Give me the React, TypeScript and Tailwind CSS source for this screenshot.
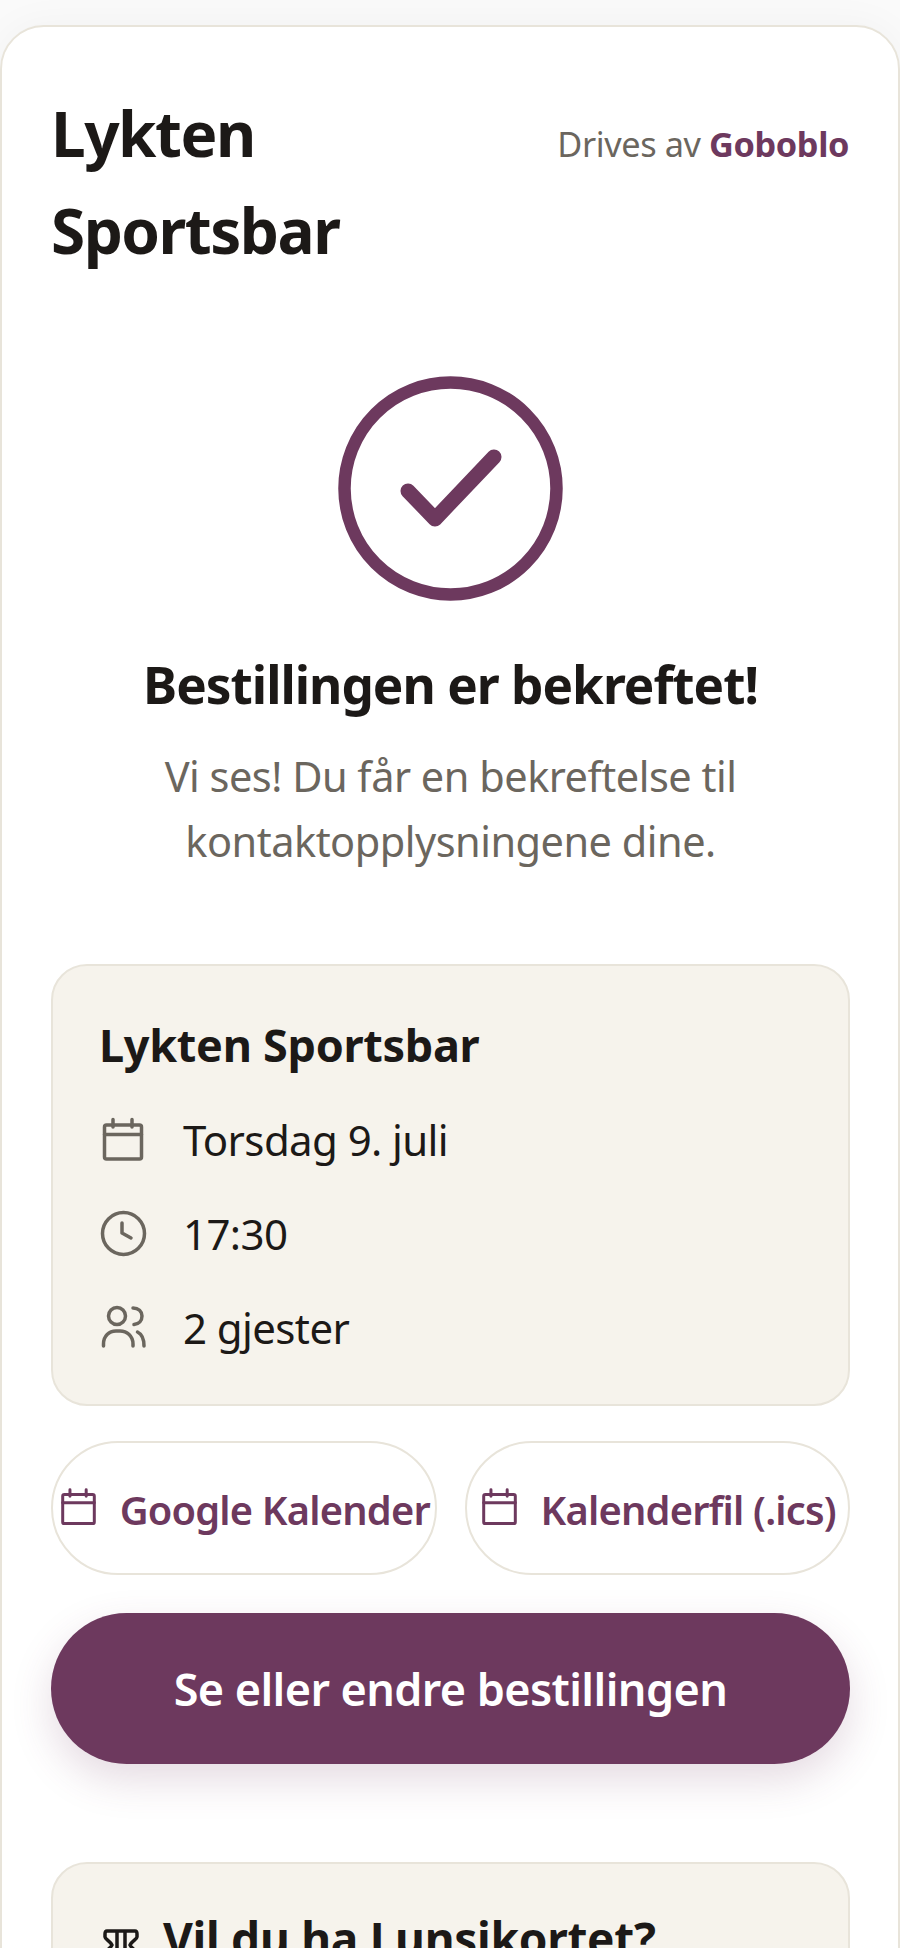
const font = { fontFamily: '"Noto Sans", "Open Sans", sans-serif' };

// Outline icons, all on a 48 unit grid with a round stroke
function Icon({ size = 48, children }: { size?: number; children: React.ReactNode }) {
  return (
    <svg
      width={size}
      height={size}
      viewBox="0 0 48 48"
      fill="none"
      stroke="currentColor"
      strokeWidth="3.5"
      strokeLinecap="round"
      strokeLinejoin="round"
      className="shrink-0"
    >
      {children}
    </svg>
  );
}

function CalendarIcon({ size }: { size?: number }) {
  return (
    <Icon size={size}>
      <rect x="5.5" y="10" width="37" height="34" rx="2" />
      <path d="M5.5 19.5H42.5M14 4.5V12M33 4.5V12" />
    </Icon>
  );
}

function ClockIcon() {
  return (
    <Icon>
      <circle cx="24.5" cy="24.5" r="21" />
      <path d="M23 14V24L32 29" />
    </Icon>
  );
}

function GuestsIcon() {
  return (
    <Icon>
      <circle cx="18" cy="13" r="8.5" />
      <path d="M4.5 43V41C4.5 33 10 28 17 28H21C28 28 34 33 34 41V43" />
      <path d="M34 5C39.5 5 43 8.5 43 13C43 17.5 40 21 35 21.5" />
      <path d="M38.5 29C42.5 31 45 35.5 45 43" />
    </Icon>
  );
}

function TicketIcon() {
  return (
    <svg width="36" height="32" viewBox="0 0 36 32" fill="none" stroke="currentColor" strokeWidth="3.5" strokeLinejoin="round" className="shrink-0">
      <path d="M4 2H32C33.5 2 34 3.5 34 5V8C34 10 29 12 27 16C29 20 34 22 34 24V27C34 28.5 33.5 30 32 30H4C2.5 30 2 28.5 2 27V24C2 22 7 20 9 16C7 12 2 10 2 8V5C2 3.5 2.500 2 4 2Z" />
      <path d="M14 2V30M22 2V30" />
    </svg>
  );
}

function DetailRow({ icon, label }: { icon: React.ReactNode; label: string }) {
  return (
    <div className="flex items-center h-[94px]">
      <div className="w-[84px] shrink-0 -translate-y-[1px] text-[#6b665e]">{icon}</div>
      <span className="text-[42px] leading-none text-[#1c1917] tracking-[-0.6px]">{label}</span>
    </div>
  );
}

function CalendarLink({ label }: { label: string }) {
  return (
    <button className="flex-1 h-[134px] rounded-full border-2 border-[#e8e4da] bg-white flex items-center justify-center gap-[21px] text-[#6d395e] overflow-hidden">
      <div className="-mt-[4px]">
        <CalendarIcon size={41} />
      </div>
      <span className="mt-[3px] text-[39.8px] font-semibold tracking-[-0.8px] whitespace-nowrap">{label}</span>
    </button>
  );
}

export default function App() {
  return (
    <div className="h-[1948px] overflow-hidden bg-[#fafafa] pt-[25px]" style={font}>
      <div className="h-[2000px] rounded-t-[44px] border-2 border-[#e8e4da] bg-white pl-[49px] pr-[48px] pt-[58px] shadow-[0_0_40px_rgba(0,0,0,0.04)]">
        <header className="flex items-start justify-between">
          <h1 className="w-[340px] text-[62px] leading-[97px] font-bold text-[#1c1917] tracking-[-1.5px]">
            Lykten Sportsbar
          </h1>
          <p className="mt-[34px] mr-[1px] text-[34.3px] leading-[50px] text-[#6b665e] tracking-[-0.4px]">
            Drives av <span className="font-bold text-[#6d395e]">Goboblo</span>
          </p>
        </header>

        <div className="mt-[97px] flex flex-col items-center text-center">
          <svg width="225" height="225" viewBox="0 0 225 225" fill="none" stroke="#6d395e" strokeLinecap="round" strokeLinejoin="round">
            <circle cx="112.5" cy="112.5" r="106" strokeWidth="12.5" />
            <path d="M70 115 L97 143 L156 81" strokeWidth="15" />
          </svg>
          <h2 className="mt-[43px] text-[51.3px] leading-[80px] font-bold text-[#1c1917] tracking-[-1px]">
            Bestillingen er bekreftet!
          </h2>
          <p className="mt-[20px] w-[660px] text-[41.5px] leading-[65px] text-[#6b665e] tracking-[-0.5px]">
            Vi ses! Du får en bekreftelse til kontaktopplysningene dine.
          </p>
        </div>

        <section className="mt-[90px] h-[442px] rounded-[36px] border-2 border-[#e8e4da] bg-[#f6f3ec] px-[46px] pt-[49px]">
          <h3 className="text-[45px] leading-[60px] font-bold text-[#1c1917] tracking-[-0.3px]">Lykten Sportsbar</h3>
          <div className="mt-[18px]">
            <DetailRow icon={<CalendarIcon />} label="Torsdag 9. juli" />
            <DetailRow icon={<ClockIcon />} label="17:30" />
            <DetailRow icon={<GuestsIcon />} label="2 gjester" />
          </div>
        </section>

        <div className="mt-[35px] flex gap-[28px]">
          <CalendarLink label="Google Kalender" />
          <CalendarLink label="Kalenderfil (.ics)" />
        </div>

        <button className="mt-[38px] w-full h-[151px] rounded-full bg-[#6d395e] text-white text-[45px] font-semibold tracking-[-0.6px] shadow-[0_16px_40px_rgba(111,58,96,0.18)]">
          Se eller endre bestillingen
        </button>

        <section className="mt-[98px] h-[300px] rounded-[36px] border-2 border-[#e8e4da] bg-[#f6f3ec] px-[46px] pt-[44px]">
          <div className="flex items-start gap-[24px]">
            <div className="mt-[21px] ml-[4px] text-[#1c1917]">
              <TicketIcon />
            </div>
            <h3 className="text-[46px] leading-[60px] font-bold text-[#1c1917] tracking-[-0.3px]">Vil du ha Lunsjkortet?</h3>
          </div>
        </section>
      </div>
    </div>
  );
}
